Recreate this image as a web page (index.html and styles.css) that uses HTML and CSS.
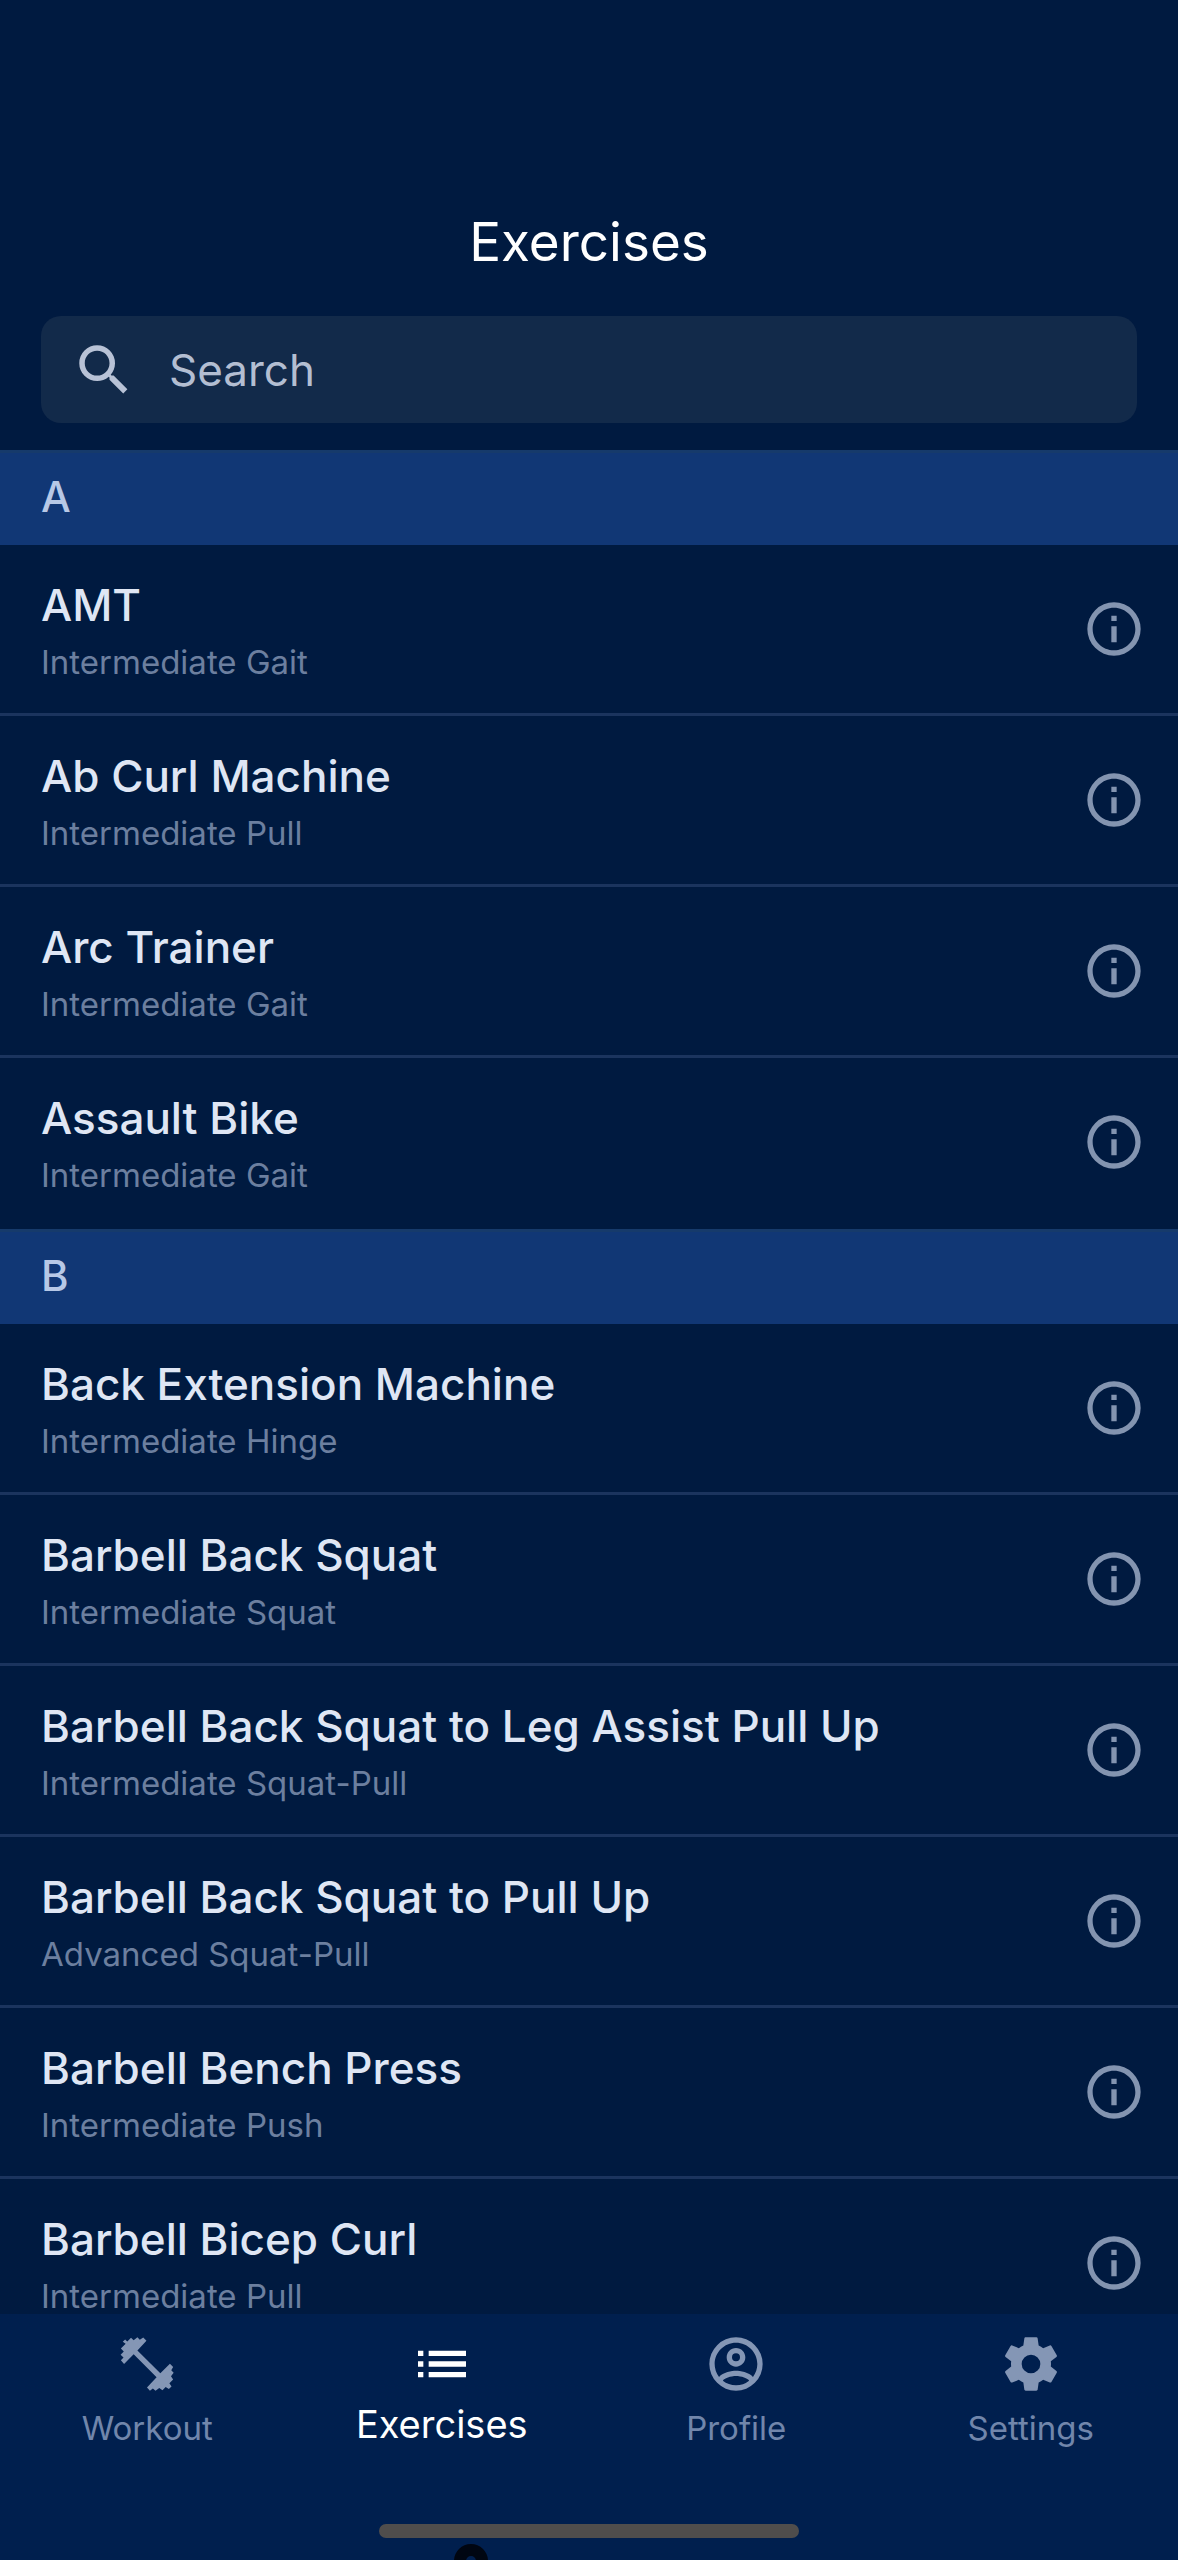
FILE: index.html
```html
<!DOCTYPE html>
<html lang="en">
<head>
    <meta charset="UTF-8">
    <meta name="viewport" content="width=device-width, initial-scale=1.0">
    <title>Exercises</title>
    <link rel="stylesheet" href="styles.css">
</head>
<body>
    <!-- Shared icons -->
    <svg class="sprite" aria-hidden="true">
        <symbol id="icon-info" viewBox="0 0 24 24">
            <path d="M11 9h2V7h-2m1 13c-4.41 0-8-3.59-8-8s3.59-8 8-8 8 3.59 8 8-3.59 8-8 8m0-18A10 10 0 0 0 2 12a10 10 0 0 0 10 10 10 10 0 0 0 10-10A10 10 0 0 0 12 2m-1 15h2v-6h-2v6z"/>
        </symbol>
    </svg>

    <div class="app">
        <header class="header">
            <h1 class="title">Exercises</h1>
            <label class="search">
                <svg class="search-icon" viewBox="0 0 24 24" aria-hidden="true">
                    <path d="M9.5 3A6.5 6.5 0 0 1 16 9.5c0 1.61-.59 3.09-1.56 4.23l.27.27h.79l5 5-1.5 1.5-5-5v-.79l-.27-.27A6.516 6.516 0 0 1 9.5 16 6.5 6.5 0 0 1 3 9.5 6.5 6.5 0 0 1 9.5 3m0 2C7 5 5 7 5 9.5S7 14 9.5 14 14 12 14 9.5 12 5 9.5 5z"/>
                </svg>
                <input class="search-input" type="text" placeholder="Search" aria-label="Search">
            </label>
        </header>

        <main class="list">
            <!-- A -->
            <h2 class="letter">A</h2>
            <ul class="group">
                <li class="row">
                    <div class="text">
                        <h3 class="name">AMT</h3>
                        <p class="kind">Intermediate Gait</p>
                    </div>
                    <button class="info" aria-label="About AMT"><svg><use href="#icon-info"/></svg></button>
                </li>
                <li class="row">
                    <div class="text">
                        <h3 class="name">Ab Curl Machine</h3>
                        <p class="kind">Intermediate Pull</p>
                    </div>
                    <button class="info" aria-label="About Ab Curl Machine"><svg><use href="#icon-info"/></svg></button>
                </li>
                <li class="row">
                    <div class="text">
                        <h3 class="name">Arc Trainer</h3>
                        <p class="kind">Intermediate Gait</p>
                    </div>
                    <button class="info" aria-label="About Arc Trainer"><svg><use href="#icon-info"/></svg></button>
                </li>
                <li class="row">
                    <div class="text">
                        <h3 class="name">Assault Bike</h3>
                        <p class="kind">Intermediate Gait</p>
                    </div>
                    <button class="info" aria-label="About Assault Bike"><svg><use href="#icon-info"/></svg></button>
                </li>
            </ul>

            <!-- B -->
            <h2 class="letter">B</h2>
            <ul class="group">
                <li class="row">
                    <div class="text">
                        <h3 class="name">Back Extension Machine</h3>
                        <p class="kind">Intermediate Hinge</p>
                    </div>
                    <button class="info" aria-label="About Back Extension Machine"><svg><use href="#icon-info"/></svg></button>
                </li>
                <li class="row">
                    <div class="text">
                        <h3 class="name">Barbell Back Squat</h3>
                        <p class="kind">Intermediate Squat</p>
                    </div>
                    <button class="info" aria-label="About Barbell Back Squat"><svg><use href="#icon-info"/></svg></button>
                </li>
                <li class="row">
                    <div class="text">
                        <h3 class="name">Barbell Back Squat to Leg Assist Pull Up</h3>
                        <p class="kind">Intermediate Squat-Pull</p>
                    </div>
                    <button class="info" aria-label="About Barbell Back Squat to Leg Assist Pull Up"><svg><use href="#icon-info"/></svg></button>
                </li>
                <li class="row">
                    <div class="text">
                        <h3 class="name">Barbell Back Squat to Pull Up</h3>
                        <p class="kind">Advanced Squat-Pull</p>
                    </div>
                    <button class="info" aria-label="About Barbell Back Squat to Pull Up"><svg><use href="#icon-info"/></svg></button>
                </li>
                <li class="row">
                    <div class="text">
                        <h3 class="name">Barbell Bench Press</h3>
                        <p class="kind">Intermediate Push</p>
                    </div>
                    <button class="info" aria-label="About Barbell Bench Press"><svg><use href="#icon-info"/></svg></button>
                </li>
                <li class="row">
                    <div class="text">
                        <h3 class="name">Barbell Bicep Curl</h3>
                        <p class="kind">Intermediate Pull</p>
                    </div>
                    <button class="info" aria-label="About Barbell Bicep Curl"><svg><use href="#icon-info"/></svg></button>
                </li>
            </ul>
        </main>

        <footer class="bottom">
            <nav class="tabs">
                <a class="tab" href="#workout">
                    <svg viewBox="0 0 24 24" aria-hidden="true">
                        <path d="M2.2 10.6 3.2 9.6 2.1 8.5 3.3 7.3 2.2 6.2 4 4.4 2.9 3.7 3.8 2.8 4.6 3.6 6 2.2 7 3.1 8.4 2 9.3 2.9 10.6 2.1 11.8 3.3 8.4 6.9 17 15.5 20.6 11.9 21.8 13.1 21.1 14.3 22 15.3 21 16.6 21.8 17.8 20.4 19.2 21.2 20.4 20.2 21.4 19 20.6 17.8 21.8 16.6 21 15.2 22 14.2 21.2 13.1 22 12 20.8 15.6 17 7 8.3 3.4 12z"/>
                    </svg>
                    <span>Workout</span>
                </a>
                <a class="tab active" href="#exercises" aria-current="page">
                    <svg viewBox="0 0 24 24" aria-hidden="true">
                        <path d="M7 7h14v2H7zM7 11h14v2H7zM7 15h14v2H7zM3 7h2v2H3zM3 11h2v2H3zM3 15h2v2H3z"/>
                    </svg>
                    <span>Exercises</span>
                </a>
                <a class="tab" href="#profile">
                    <svg viewBox="0 0 24 24" aria-hidden="true">
                        <path d="M12 2A10 10 0 0 0 2 12a10 10 0 0 0 10 10 10 10 0 0 0 10-10A10 10 0 0 0 12 2M7.07 18.28c.43-.9 3.05-1.78 4.93-1.78s4.5.88 4.93 1.78A7.893 7.893 0 0 1 12 20c-1.86 0-3.57-.64-4.93-1.72m11.29-1.45c-1.43-1.74-4.9-2.33-6.36-2.33s-4.93.59-6.36 2.33A7.928 7.928 0 0 1 4 12c0-4.41 3.59-8 8-8s8 3.59 8 8c0 1.82-.62 3.5-1.64 4.83M12 6c-1.94 0-3.5 1.56-3.5 3.5S10.06 13 12 13s3.5-1.56 3.5-3.5S13.94 6 12 6m0 5a1.5 1.5 0 0 1-1.5-1.5A1.5 1.5 0 0 1 12 8a1.5 1.5 0 0 1 1.5 1.5A1.5 1.5 0 0 1 12 11z"/>
                    </svg>
                    <span>Profile</span>
                </a>
                <a class="tab" href="#settings">
                    <svg viewBox="0 0 24 24" aria-hidden="true">
                        <path d="M12 15.5A3.5 3.5 0 0 1 8.5 12 3.5 3.5 0 0 1 12 8.5a3.5 3.5 0 0 1 3.5 3.5 3.5 3.5 0 0 1-3.5 3.5m7.43-2.53c.04-.32.07-.64.07-.97s-.03-.66-.07-1l2.11-1.63c.19-.15.24-.42.12-.64l-2-3.46c-.12-.22-.39-.31-.61-.22l-2.49 1c-.52-.39-1.06-.73-1.69-.98l-.37-2.65A.506.506 0 0 0 14 2h-4c-.25 0-.46.18-.5.42l-.37 2.65c-.63.25-1.17.59-1.69.98l-2.49-1c-.22-.09-.49 0-.61.22l-2 3.46c-.13.22-.07.49.12.64L4.57 11c-.04.34-.07.67-.07 1s.03.65.07.97l-2.11 1.66c-.19.15-.25.42-.12.64l2 3.46c.12.22.39.3.61.22l2.49-1.01c.52.4 1.06.74 1.69.99l.37 2.65c.04.24.25.42.5.42h4c.25 0 .46-.18.5-.42l.37-2.65c.63-.26 1.17-.59 1.69-.99l2.49 1.01c.22.08.49 0 .61-.22l2-3.46c.12-.22.07-.49-.12-.64z"/>
                    </svg>
                    <span>Settings</span>
                </a>
            </nav>
            <div class="home-bar"></div>
            <div class="ring"></div>
        </footer>
    </div>
</body>
</html>
```
FILE: styles.css
```css
* {
    box-sizing: border-box;
    margin: 0;
    padding: 0;
}
body {
    font-family: Inter, -apple-system, 'Helvetica Neue', sans-serif;
    background-color: #001a40;
    color: #dfe6f4;
}
.sprite {
    display: none;
}
.app {
    display: flex;
    flex-direction: column;
    height: 100vh;
}
.header {
    padding: 208px 41px 27px;
}
.title {
    font-size: 53px;
    line-height: 68px;
    font-weight: 400;
    text-align: center;
    color: #fff;
    margin-bottom: 40px;
}
.search {
    display: flex;
    align-items: center;
    gap: 32px;
    height: 107px;
    padding: 0 30px;
    border-radius: 20px;
    background-color: #122a4a;
}
.search-icon {
    width: 66px;
    height: 66px;
    fill: #b8c2d6;
}
.search-input {
    flex: 1;
    min-width: 0;
    border: none;
    outline: none;
    background: none;
    font-family: inherit;
    font-size: 44px;
    color: #dfe6f4;
}
.search-input::placeholder {
    color: #b3bed2;
    opacity: 1;
}
.list {
    flex: 1;
    min-height: 0;
    overflow: hidden;
}
.letter {
    height: 95px;
    padding-left: 41px;
    border-top: 3px solid #163a6b;
    background-color: #113775;
    font-size: 42px;
    line-height: 88px;
    font-weight: 500;
    color: #b7c8e6;
}
.group {
    list-style: none;
}
.row {
    display: flex;
    align-items: center;
    justify-content: space-between;
    height: 171px;
    padding: 0 32px 0 41px;
    border-bottom: 3px solid #1b345e;
}
.row:last-child {
    border-bottom-color: transparent;
}
.text {
    padding-top: 10px;
}
.name {
    font-size: 44px;
    line-height: 56px;
    font-weight: 500;
}
.kind {
    font-size: 33px;
    line-height: 58px;
    color: #6c7f9f;
}
.info {
    width: 64px;
    height: 64px;
    border: none;
    background: none;
    cursor: pointer;
}
.info svg {
    display: block;
    width: 64px;
    height: 64px;
    fill: #8394b0;
}
.bottom {
    position: relative;
    padding: 18px 0 22px;
    overflow: hidden;
    background-color: #001f4e;
}
.tabs {
    display: grid;
    grid-template-columns: repeat(4, 1fr);
    margin-bottom: 64px;
}
.tab {
    display: flex;
    flex-direction: column;
    align-items: center;
    color: #7186ab;
    font-size: 33px;
    line-height: 64px;
    text-decoration: none;
}
.tab svg {
    width: 64px;
    height: 64px;
    fill: #8496b5;
}
.active {
    color: #fff;
    font-size: 38px;
    line-height: 56px;
}
.active svg {
    fill: #fff;
}
.home-bar {
    width: 420px;
    height: 14px;
    margin: 0 auto;
    border-radius: 7px;
    background-color: #4f4d4c;
}
/* Round marker cut off by the bottom edge */
.ring {
    position: absolute;
    left: 40%;
    bottom: -18px;
    width: 34px;
    height: 34px;
    margin-left: -17px;
    border: 12px solid #000612;
    border-radius: 50%;
}
```
